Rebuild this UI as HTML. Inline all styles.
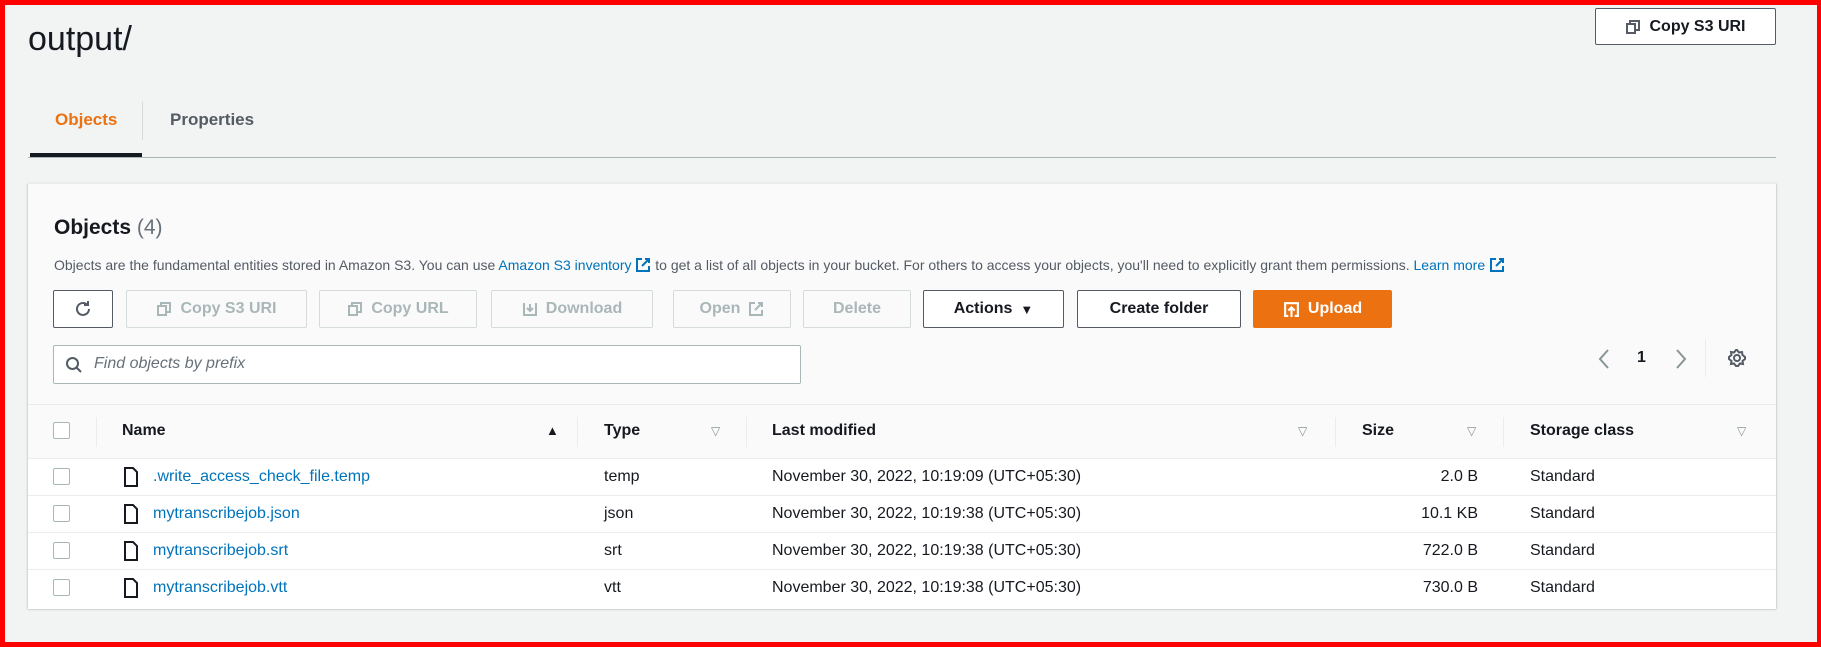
<!DOCTYPE html>
<html><head><meta charset="utf-8"><style>
*{box-sizing:border-box;margin:0;padding:0}
body{width:1821px;height:647px;overflow:hidden;background:#f00;font-family:"Liberation Sans",sans-serif;color:#16191f;position:relative}
.page{position:absolute;left:5px;top:5px;width:1812px;height:637px;background:#f2f3f3}
.a{position:absolute;white-space:nowrap}
.btn{position:absolute;height:38px;border:1px solid #545b64;border-radius:2px;background:#fff;font-weight:bold;font-size:16px;display:flex;align-items:center;justify-content:center;gap:8px;color:#16191f}
.dis{border-color:#d5dbdb;color:#aab7b8;background:#fafafa}
.row{position:absolute;left:0;width:1748px;background:#fff;border-top:1px solid #eaeded;height:38px;font-size:16px}
.row .a{top:9px}
.cb{position:absolute;width:17px;height:17px;border:1px solid #aab7b8;border-radius:2px;background:#fff}
.lnk{color:#0073bb}
.hd{font-weight:bold;font-size:16px;color:#16191f}
.tri{color:#879596;font-size:12px}
.ext{display:inline-block;vertical-align:-3px}
</style></head><body><div class="page"></div>
<div class="a" style="left:28px;top:20px;font-size:34px;color:#16191f">output/</div>
<div class="btn" style="left:1595px;top:8px;width:181px;height:37px;border-color:#545b64">
<svg width="16" height="16" viewBox="0 0 16 16" fill="none" stroke="#545b64" stroke-width="2"><rect x="2" y="5" width="8" height="9"/><path d="M5 5V2h9v9h-4"/></svg>Copy S3 URI</div>
<div class="a" style="left:55px;top:110px;font-size:17px;font-weight:bold;color:#ec7211">Objects</div>
<div class="a" style="left:142px;top:102px;width:1px;height:38px;background:#d5dbdb"></div>
<div class="a" style="left:170px;top:110px;font-size:17px;font-weight:bold;color:#545b64">Properties</div>
<div class="a" style="left:28px;top:157px;width:1748px;height:1px;background:#aab7b8"></div>
<div class="a" style="left:30px;top:153px;width:112px;height:4px;background:#16191f"></div>

<div class="a" style="left:28px;top:183px;width:1748px;height:425px;background:#fafafa;box-shadow:0 1px 2px rgba(0,28,36,.4);border-top:1px solid #eaeded">
<div class="a" style="left:26px;top:32px;font-size:21px;font-weight:bold">Objects <span style="font-weight:normal;color:#687078">(4)</span></div>
<div class="a" style="left:26px;top:73px;font-size:14px;color:#545b64">Objects are the fundamental entities stored in Amazon S3. You can use <span class="lnk">Amazon S3 inventory <svg class="ext" width="16" height="16" viewBox="0 0 16 16" fill="none" stroke="#0073bb" stroke-width="2"><path d="M7 2H2v12h12V9M10 2h4v4M14 2L7 9"/></svg></span> to get a list of all objects in your bucket. For others to access your objects, you'll need to explicitly grant them permissions. <span class="lnk">Learn more <svg class="ext" width="16" height="16" viewBox="0 0 16 16" fill="none" stroke="#0073bb" stroke-width="2"><path d="M7 2H2v12h12V9M10 2h4v4M14 2L7 9"/></svg></span></div>
<div class="btn" style="left:25px;top:106px;width:60px"><svg width="20" height="20" viewBox="0 0 20 20" fill="none" stroke="#545b64" stroke-width="2"><path d="M16 10a6 6 0 1 1-2-4.5"/><path d="M15 2v4h-4"/></svg></div>
<div class="btn dis" style="left:98px;top:106px;width:181px"><svg width="16" height="16" viewBox="0 0 16 16" fill="none" stroke="#aab7b8" stroke-width="2"><rect x="2" y="5" width="8" height="9"/><path d="M5 5V2h9v9h-4"/></svg>Copy S3 URI</div>
<div class="btn dis" style="left:291px;top:106px;width:158px"><svg width="16" height="16" viewBox="0 0 16 16" fill="none" stroke="#aab7b8" stroke-width="2"><rect x="2" y="5" width="8" height="9"/><path d="M5 5V2h9v9h-4"/></svg>Copy URL</div>
<div class="btn dis" style="left:463px;top:106px;width:162px"><svg width="16" height="16" viewBox="0 0 16 16" fill="none" stroke="#aab7b8" stroke-width="2"><path d="M2 2v12h12V2M8 3v7M5 7l3 3 3-3"/></svg>Download</div>
<div class="btn dis" style="left:645px;top:106px;width:118px">Open <svg width="16" height="16" viewBox="0 0 16 16" fill="none" stroke="#aab7b8" stroke-width="2"><path d="M7 2H2v12h12V9M10 2h4v4M14 2L7 9"/></svg></div>
<div class="btn dis" style="left:775px;top:106px;width:108px">Delete</div>
<div class="btn" style="left:895px;top:106px;width:141px">Actions <span style="font-size:13px">&#9660;</span></div>
<div class="btn" style="left:1049px;top:106px;width:164px">Create folder</div>
<div class="btn" style="left:1225px;top:106px;width:139px;background:#ec7211;border-color:#ec7211;color:#fff"><svg width="17" height="17" viewBox="0 0 16 16" fill="none" stroke="#fff" stroke-width="2"><path d="M5 14H2V2h12v12h-3M8 15V6M5 9l3-3 3 3"/></svg>Upload</div>
<div class="a" style="left:25px;top:161px;width:748px;height:39px;border:1px solid #aab7b8;border-radius:2px;background:#fff"></div>
<svg class="a" style="left:37px;top:172px" width="18" height="18" viewBox="0 0 18 18" fill="none" stroke="#545b64" stroke-width="2"><circle cx="7.5" cy="7.5" r="5.5"/><path d="M11.5 11.5L16 16"/></svg>
<div class="a" style="left:66px;top:171px;font-size:16px;font-style:italic;color:#687078">Find objects by prefix</div>
<svg class="a" style="left:1570px;top:164px" width="12" height="22" viewBox="0 0 12 22" fill="none" stroke="#879596" stroke-width="2"><path d="M10 2L2 11l8 9"/></svg>
<div class="a" style="left:1609px;top:165px;font-size:16px;font-weight:bold">1</div>
<svg class="a" style="left:1647px;top:164px" width="12" height="22" viewBox="0 0 12 22" fill="none" stroke="#879596" stroke-width="2"><path d="M2 2l8 9-8 9"/></svg>
<div class="a" style="left:1677px;top:155px;width:1px;height:38px;background:#eaeded"></div>
<svg class="a" style="left:1699px;top:164px" width="20" height="20" viewBox="0 0 20 20" fill="none" stroke="#545b64" stroke-width="2"><circle cx="10" cy="10" r="3"/><path d="M10 2l2 2.5 3-.5.5 3L18 9v2l-2.5 2 .5 3-3-.5L11 18H9l-2-2.5-3 .5.5-3L2 11V9l2.5-2L4 4l3 .5L9 2z"/></svg>
<div class="a" style="left:0;top:220px;width:1748px;height:1px;background:#eaeded"></div>
<div class="cb" style="left:25px;top:238px"></div>
<div class="a" style="left:68px;top:233px;width:1px;height:30px;background:#eaeded"></div>
<div class="a hd" style="left:94px;top:238px">Name</div>
<div class="a" style="left:518px;top:239px;font-size:13px">&#9650;</div>
<div class="a" style="left:549px;top:233px;width:1px;height:30px;background:#eaeded"></div>
<div class="a hd" style="left:576px;top:238px">Type</div>
<div class="a tri" style="left:683px;top:240px">&#9661;</div>
<div class="a" style="left:718px;top:233px;width:1px;height:30px;background:#eaeded"></div>
<div class="a hd" style="left:744px;top:238px">Last modified</div>
<div class="a tri" style="left:1270px;top:240px">&#9661;</div>
<div class="a" style="left:1307px;top:233px;width:1px;height:30px;background:#eaeded"></div>
<div class="a hd" style="left:1334px;top:238px">Size</div>
<div class="a tri" style="left:1439px;top:240px">&#9661;</div>
<div class="a" style="left:1475px;top:233px;width:1px;height:30px;background:#eaeded"></div>
<div class="a hd" style="left:1502px;top:238px">Storage class</div>
<div class="a tri" style="left:1709px;top:240px">&#9661;</div>

<div class="row" style="top:274px"><div class="cb" style="left:25px;top:9px"></div><svg class="a" style="left:96px;top:8px" width="14" height="20" viewBox="0 0 14 20" fill="none" stroke="#16191f" stroke-width="2"><path d="M1 1h8l4 4v14H1z"/></svg><div class="a lnk" style="left:125px">.write_access_check_file.temp</div><div class="a" style="left:576px">temp</div><div class="a" style="left:744px">November 30, 2022, 10:19:09 (UTC+05:30)</div><div class="a" style="right:298px">2.0 B</div><div class="a" style="left:1502px">Standard</div></div>
<div class="row" style="top:311px"><div class="cb" style="left:25px;top:9px"></div><svg class="a" style="left:96px;top:8px" width="14" height="20" viewBox="0 0 14 20" fill="none" stroke="#16191f" stroke-width="2"><path d="M1 1h8l4 4v14H1z"/></svg><div class="a lnk" style="left:125px">mytranscribejob.json</div><div class="a" style="left:576px">json</div><div class="a" style="left:744px">November 30, 2022, 10:19:38 (UTC+05:30)</div><div class="a" style="right:298px">10.1 KB</div><div class="a" style="left:1502px">Standard</div></div>
<div class="row" style="top:348px"><div class="cb" style="left:25px;top:9px"></div><svg class="a" style="left:96px;top:8px" width="14" height="20" viewBox="0 0 14 20" fill="none" stroke="#16191f" stroke-width="2"><path d="M1 1h8l4 4v14H1z"/></svg><div class="a lnk" style="left:125px">mytranscribejob.srt</div><div class="a" style="left:576px">srt</div><div class="a" style="left:744px">November 30, 2022, 10:19:38 (UTC+05:30)</div><div class="a" style="right:298px">722.0 B</div><div class="a" style="left:1502px">Standard</div></div>
<div class="row" style="top:385px;height:40px"><div class="cb" style="left:25px;top:9px"></div><svg class="a" style="left:96px;top:8px" width="14" height="20" viewBox="0 0 14 20" fill="none" stroke="#16191f" stroke-width="2"><path d="M1 1h8l4 4v14H1z"/></svg><div class="a lnk" style="left:125px">mytranscribejob.vtt</div><div class="a" style="left:576px">vtt</div><div class="a" style="left:744px">November 30, 2022, 10:19:38 (UTC+05:30)</div><div class="a" style="right:298px">730.0 B</div><div class="a" style="left:1502px">Standard</div></div>
</div>
</body></html>
